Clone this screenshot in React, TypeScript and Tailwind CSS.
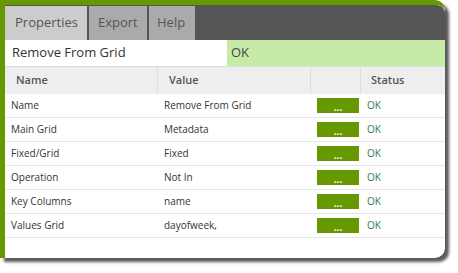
const rows = [
  { name: 'Name', value: 'Remove From Grid' },
  { name: 'Main Grid', value: 'Metadata' },
  { name: 'Fixed/Grid', value: 'Fixed' },
  { name: 'Operation', value: 'Not In' },
  { name: 'Key Columns', value: 'name' },
  { name: 'Values Grid', value: 'dayofweek,' },
];

const cols = 'grid grid-cols-[153px_153px_50px_84px]';

export default function App() {
  return (
    <div className="w-[458px] h-[273px] bg-white font-['Open_Sans',sans-serif]">
      <div className="w-[445px] h-[258px] border-l-[5px] border-t-[5px] border-[#669900] rounded-tr-[10px] rounded-br-[10px] bg-white shadow-[4px_4px_3px_rgba(0,0,0,0.65)] overflow-hidden flex flex-col">
        {/* tabs */}
        <div className="h-[35px] bg-[#555555] flex gap-[2px] rounded-tr-[8px] pt-[1px]">
          <div className="w-[82px] bg-[#cccccc] flex items-center pl-[10px] text-[13px] text-[#555]">Properties</div>
          <div className="w-[58px] bg-[#aaaaaa] flex items-center pl-[9px] text-[13px] text-[#555]">Export</div>
          <div className="w-[46px] bg-[#aaaaaa] flex items-center pl-[8px] text-[13px] text-[#555]">Help</div>
        </div>

        {/* title row */}
        <div className="h-[26px] flex text-[13px] text-[#333]">
          <div className="w-[222px] bg-white flex items-center pl-[7px]">Remove From Grid</div>
          <div className="flex-1 bg-[#c6eba8] flex items-center pl-[4px] text-[#444]">OK</div>
        </div>

        {/* header */}
        <div className={`${cols} h-[28px] bg-[#eeeeee] border-t border-[#dddddd] text-[11px] font-semibold text-[#555]`}>
          <div className="flex items-center pl-[11px] border-r border-[#dddddd]">Name</div>
          <div className="flex items-center pl-[11px] border-r border-[#dddddd]">Value</div>
          <div className="border-r border-[#dddddd]"></div>
          <div className="flex items-center pl-[10px]">Status</div>
        </div>

        {rows.map((r) => (
          <div key={r.name} className={`${cols} h-[24px] border-b border-[#e6e6e6] text-[10px] text-[#333]`}>
            <div className="flex items-center pl-[6px]">{r.name}</div>
            <div className="flex items-center pl-[6px]">{r.value}</div>
            <div className="flex items-center pl-[6px]">
              <div className="w-[42px] h-[15px] bg-[#669900] flex items-end justify-center text-white text-[10px] font-bold leading-[12px]">...</div>
            </div>
            <div className="flex items-center pl-[6px] text-[#2f7d4a]">OK</div>
          </div>
        ))}
      </div>
    </div>
  );
}
